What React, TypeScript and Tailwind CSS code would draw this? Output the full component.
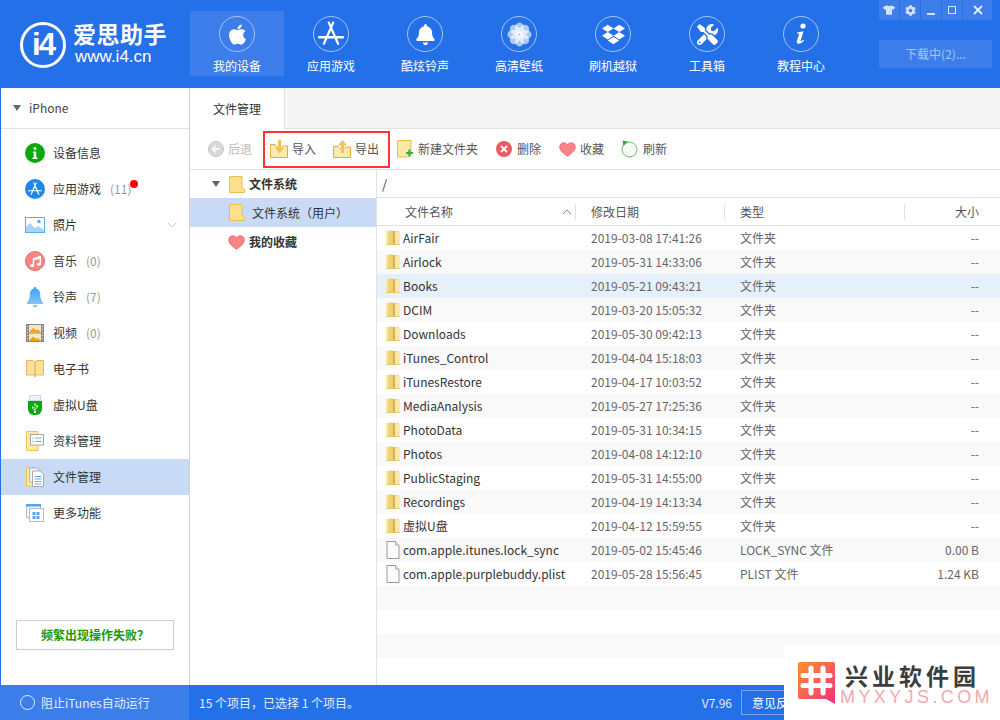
import type { ReactNode } from "react";
import { FaApple, FaBell, FaCog, FaDropbox, FaMusic, FaTools, FaTshirt, FaUsb } from "react-icons/fa";

const font = "font-['Noto_Sans_CJK_SC','Noto_Sans',sans-serif]";

const files = [
  ["AirFair", "2019-03-08 17:41:26", "文件夹", "--", "d"],
  ["Airlock", "2019-05-31 14:33:06", "文件夹", "--", "d"],
  ["Books", "2019-05-21 09:43:21", "文件夹", "--", "d"],
  ["DCIM", "2019-03-20 15:05:32", "文件夹", "--", "d"],
  ["Downloads", "2019-05-30 09:42:13", "文件夹", "--", "d"],
  ["iTunes_Control", "2019-04-04 15:18:03", "文件夹", "--", "d"],
  ["iTunesRestore", "2019-04-17 10:03:52", "文件夹", "--", "d"],
  ["MediaAnalysis", "2019-05-27 17:25:36", "文件夹", "--", "d"],
  ["PhotoData", "2019-05-31 10:34:15", "文件夹", "--", "d"],
  ["Photos", "2019-04-08 14:12:10", "文件夹", "--", "d"],
  ["PublicStaging", "2019-05-31 14:55:00", "文件夹", "--", "d"],
  ["Recordings", "2019-04-19 14:13:34", "文件夹", "--", "d"],
  ["虚拟U盘", "2019-04-12 15:59:55", "文件夹", "--", "d"],
  ["com.apple.itunes.lock_sync", "2019-05-02 15:45:46", "LOCK_SYNC 文件", "0.00 B", "f"],
  ["com.apple.purplebuddy.plist", "2019-05-28 15:56:45", "PLIST 文件", "1.24 KB", "f"],
  ["", "", "", "", ""],
  ["", "", "", "", ""],
  ["", "", "", "", ""],
  ["", "", "", "", ""],
  ["", "", "", "", ""],
];

/* ── Small drawings ───────────────────────────────────────────── */
function Flower() {
  return (
    <svg viewBox="0 0 24 24" className="h-[25px] w-[25px]">
      {[0, 45, 90, 135, 180, 225, 270, 315].map((a) => (
        <ellipse key={a} cx="12" cy="6" rx="4.4" ry="5.6" fill="#fff" fillOpacity="0.62" transform={`rotate(${a} 12 12)`} />
      ))}
      <circle cx="12" cy="12" r="2.6" fill="#fff" />
      <circle cx="12" cy="12" r="1" fill="#8fb6f2" />
    </svg>
  );
}

function AppStoreGlyph({ size = 24 }: { size?: number }) {
  return (
    <svg viewBox="0 0 24 24" width={size} height={size} fill="none" stroke="#fff" strokeWidth="2.1" strokeLinecap="round">
      <path d="M14 1.500 5.500 21M10 1.500 18.500 21M1 15h22" />
    </svg>
  );
}

function InfoGlyph() {
  return (
    <svg viewBox="0 0 12 22" className="h-[22px] w-3" fill="#fff">
      <circle cx="8" cy="3" r="2.600" />
      <path d="M2 9.500 8.500 8.200 5.700 17.500c-.2.800.5 1 1.100.5l1.700-1.500.6.7c-1.500 2-3.400 3.500-5.400 3.500-1.700 0-2.200-1.100-1.800-2.700L4 11.500c.2-.9-.4-1-1.900-.8z" />
    </svg>
  );
}

function NoteFolder({ className = "" }: { className?: string }) {
  return (
    <svg viewBox="0 0 16 17" className={className}>
      <path d="M.5.500h12.500v11.500l2.500 1.500v3H.5z" fill="#fde08f" stroke="#e9bf4f" />
    </svg>
  );
}

function Heart({ className = "" }: { className?: string }) {
  return (
    <svg viewBox="0 0 18 16" className={className}>
      <path d="M9 15.200C3.500 11.400.7 8.600.7 5.200.7 2.700 2.600.8 5 .8c1.700 0 3.100.8 4 2.200C9.900 1.600 11.300.8 13 .8c2.400 0 4.300 1.900 4.300 4.400 0 3.400-2.800 6.200-8.300 10z" fill="#fb8287" stroke="#e8646b" strokeWidth="0.8" />
    </svg>
  );
}

function YellowFolder() {
  return (
    <svg viewBox="0 0 14 18" className="h-[18px] w-[14px] shrink-0">
      <path d="M.5 2h13v14H.5z" fill="#f6e08f" />
      <path d="M6.500 2h2.500v14H6.500z" fill="#d9b24f" />
      <path d="M.5 2.500 6.500 1v15H.5z" fill="#f0d276" />
      <path d="M.5 2.500H2V16H.5z" fill="#fbeab0" />
      <path d="M9 3h4.500v13H9z" fill="#f8e8a6" />
      <path d="M.5 15h13v1H.5z" fill="#e6c768" />
    </svg>
  );
}

function FileIcon() {
  return (
    <svg viewBox="0 0 14 18" className="h-[18px] w-[14px] shrink-0">
      <path d="M1 .5h8.500L13 4v13.500H1z" fill="#fbfbfb" stroke="#9a9a9a" />
      <path d="M9.500.5V4H13" fill="#eee" stroke="#aaa" />
    </svg>
  );
}

function ImportIcon() {
  return (
    <svg viewBox="0 0 18 18" className="h-[18px] w-[18px]">
      <path d="M.5 4.500H5L7.500 8h3L13 6h4.500v11.500H.5z" fill="#fdeaaf" stroke="#e2ab3c" />
      <path d="M8 0h3v8h3l-4.500 5.500L5 8h3z" fill="#f3c05a" />
    </svg>
  );
}

function ExportIcon() {
  return (
    <svg viewBox="0 0 18 18" className="h-[18px] w-[18px]">
      <path d="M.5 6.500H5L7.500 9h3L13 7h4.500v10.500H.5z" fill="#fdeaaf" stroke="#e2ab3c" />
      <path d="M8 13V5.500H5L9.500 0 14 5.500h-3V13z" fill="#f3c05a" />
    </svg>
  );
}

function sideIcon(name: string): ReactNode {
  switch (name) {
    case "info":
      return (
        <svg viewBox="0 0 20 20" className="h-5 w-5">
          <circle cx="10" cy="10" r="10" fill="#0aa80a" />
          <circle cx="10" cy="5.500" r="1.500" fill="#fff" />
          <path d="M8 8.500h3.200v6H12.500V16h-5v-1.500h1.200V10H8z" fill="#fff" />
        </svg>
      );
    case "app":
      return (
        <span className="flex h-5 w-5 items-center justify-center rounded-full bg-[#1f86ea]">
          <AppStoreGlyph size={14} />
        </span>
      );
    case "photo":
      return (
        <svg viewBox="0 0 20 16" className="h-4 w-5">
          <rect x="0.500" y="0.500" width="19" height="15" fill="#fff" stroke="#58acf2" />
          <path d="M1 15V10l4-4 5 5 3-2 6 4v2z" fill="#a5d5fb" />
          <circle cx="14" cy="4.500" r="1.700" fill="#58acf2" />
        </svg>
      );
    case "music":
      return (
        <span className="flex h-5 w-5 items-center justify-center rounded-full border border-[#e86a6a] bg-[#f88585]">
          <FaMusic className="h-[11px] w-[11px] text-white" />
        </span>
      );
    case "bell":
      return (
        <svg viewBox="0 0 20 20" className="h-5 w-5">
          <defs>
            <linearGradient id="bellFill" x1="0" y1="0" x2="0" y2="1">
              <stop offset="0" stopColor="#3ea4f5" />
              <stop offset="1" stopColor="#8ccbfb" />
            </linearGradient>
          </defs>
          <path d="M10 0c.8 0 1.300.6 1.300 1.500 3 .8 3.900 3.300 3.900 6.200 0 3.800 1 6 3 8.300v1H1.800v-1c2-2.300 3-4.500 3-8.300 0-2.900.9-5.400 3.900-6.200C8.700.6 9.200 0 10 0zM8 18h4a2 2 0 0 1-4 1.500z" fill="url(#bellFill)" />
        </svg>
      );
    case "video":
      return (
        <svg viewBox="0 0 18 18" className="h-[18px] w-[18px]">
          <rect width="18" height="18" fill="#8a8a8a" />
          <rect x="3" y="1" width="12" height="7.500" fill="#f6e7c6" />
          <rect x="3" y="9.500" width="12" height="7.500" fill="#f6e7c6" />
          <path d="M3 8.500 7 4l3 2.500 2-1 3 3zM3 17l4-4.500 3 2.500 2-1 3 3z" fill="#f2a20c" />
          <path d="M1 2h1v1H1zM1 5h1v1H1zM1 8h1v1H1zM1 11h1v1H1zM1 14h1v1H1zM16 2h1v1h-1zM16 5h1v1h-1zM16 8h1v1h-1zM16 11h1v1h-1zM16 14h1v1h-1z" fill="#e8e8e8" />
        </svg>
      );
    case "book":
      return (
        <svg viewBox="0 0 18 18" className="h-[18px] w-[18px]">
          <path d="M.5.500H7l2 1.500 2-1.500h6.500v14.500H.5z" fill="#fee391" stroke="#eeb06e" />
          <path d="M8 2h2v14.500l-1 1-1-1z" fill="#f3bd82" />
        </svg>
      );
    case "usb":
      return (
        <span className="relative flex h-5 w-[14px] flex-col items-center">
          <span className="h-[6px] w-[12px] border border-[#ccd6e4] bg-[#eef2f8]" />
          <span className="flex h-[14px] w-[14px] items-center justify-center rounded-b-[6px] bg-[#0aa80a]">
            <FaUsb className="h-[10px] w-[10px] rotate-[-90deg] text-white" />
          </span>
        </span>
      );
    case "data":
      return (
        <svg viewBox="0 0 18 20" className="h-5 w-[18px]">
          <path d="M.5.500H12V19.500H.5z" fill="#fde9ac" stroke="#f0c64a" />
          <rect x="4.500" y="3.500" width="13" height="10.500" fill="#fff" stroke="#a8a8a8" />
          <path d="M6.500 7h1.500M9.500 7h6M6.500 10.500h1.500M9.500 10.500h6" stroke="#6aa9ee" />
        </svg>
      );
    case "files":
      return (
        <svg viewBox="0 0 18 20" className="h-5 w-[18px]">
          <path d="M.5.500H9v18.500H.5z" fill="#fde9ac" stroke="#f0c64a" />
          <path d="M3.500 1h9v14h-9z" fill="#f4f4f4" stroke="#b5b5b5" />
          <path d="M6.500 4H14l3.500 3v12.500h-11z" fill="#fff" stroke="#a8a8a8" />
          <path d="M8.500 9.500h7M8.500 12h7M8.500 14.500h7M8.500 17h7" stroke="#6aa9ee" />
        </svg>
      );
    default:
      return (
        <svg viewBox="0 0 18 18" className="h-[18px] w-[18px]">
          <rect x="0.500" y="0.500" width="14" height="13" fill="#f4f4f4" stroke="#bbb" />
          <rect x="0" y="0" width="15" height="2.500" fill="#54a6f0" />
          <rect x="3.500" y="4.500" width="14" height="13" fill="#fff" stroke="#bbb" />
          <path d="M6.500 8h3v3h-3zM10.500 8h3v3h-3zM6.500 12h3v3h-3zM10.500 12h3v3h-3z" fill="#54a6f0" />
        </svg>
      );
  }
}

/* ── Header ───────────────────────────────────────────────────── */
const navItems: { label: string; icon: ReactNode; active?: boolean }[] = [
  { label: "我的设备", icon: <FaApple className="h-[23px] w-[23px] text-white" />, active: true },
  { label: "应用游戏", icon: <AppStoreGlyph size={26} /> },
  { label: "酷炫铃声", icon: <FaBell className="h-[21px] w-[21px] text-white" /> },
  { label: "高清壁纸", icon: <Flower /> },
  { label: "刷机越狱", icon: <FaDropbox className="h-[23px] w-[23px] text-white" /> },
  { label: "工具箱", icon: <FaTools className="h-[21px] w-[21px] text-white" /> },
  { label: "教程中心", icon: <InfoGlyph /> },
];

function Header() {
  return (
    <div className="flex h-[88px] shrink-0 bg-[#2470e8] text-white">
      <div className="flex w-[190px] shrink-0 items-center pl-5 pt-[1px]">
        <div className="flex h-[46px] w-[46px] items-center justify-center rounded-full border-[3px] border-white font-['Liberation_Sans',sans-serif] text-[31px] font-bold leading-none tracking-[-2px]">
          i4
        </div>
        <div className="mb-[5px] ml-[7px] flex flex-col">
          <span className="text-[23px] font-bold leading-[29px] tracking-[0.5px]">爱思助手</span>
          <span className="pl-[2px] font-['Liberation_Sans',sans-serif] text-[17px] leading-[18px]">www.i4.cn</span>
        </div>
      </div>
      <div className="flex pt-[11px]">
        {navItems.map((n) => (
          <div key={n.label} className={`flex h-[65px] w-[94px] flex-col items-center pt-[5px] ${n.active ? "bg-[#3d7dea]" : ""}`}>
            <span className="flex h-9 w-9 items-center justify-center rounded-full border border-[#a4c3f4]">{n.icon}</span>
            <span className="mt-[5px] text-[12px] leading-[18px]">{n.label}</span>
          </div>
        ))}
      </div>
      <div className="ml-[31px] flex w-[113px] flex-col">
        <div className="flex h-5 gap-[1px] text-[#d5e3fa]">
          <span className="flex w-5 items-center justify-center bg-[#3d7dea]"><FaTshirt className="h-3 w-3" /></span>
          <span className="flex w-5 items-center justify-center bg-[#3d7dea]"><FaCog className="h-[11px] w-[11px]" /></span>
          <span className="flex w-5 items-center justify-center bg-[#3d7dea]"><span className="mt-[7px] h-[2px] w-2 bg-[#d5e3fa]" /></span>
          <span className="flex w-5 items-center justify-center bg-[#3d7dea]"><span className="h-2 w-2 border border-[#d5e3fa]" /></span>
          <span className="flex flex-1 items-center justify-center bg-[#3d7dea]">
            <svg viewBox="0 0 10 10" className="h-[10px] w-[10px]" stroke="#e5eefc" strokeWidth="1.800"><path d="M1 1l8 8M9 1l-8 8" /></svg>
          </span>
        </div>
        <div className="mt-5 flex h-[28px] items-center justify-center bg-[#3d7dea] text-[12px] text-[#a9c6f3]">下载中(2)...</div>
      </div>
    </div>
  );
}

/* ── Sidebar ──────────────────────────────────────────────────── */
const sideItems = [
  { label: "设备信息", icon: "info" },
  { label: "应用游戏", icon: "app", count: "(11)", dot: true },
  { label: "照片", icon: "photo", chevron: true },
  { label: "音乐", icon: "music", count: "(0)" },
  { label: "铃声", icon: "bell", count: "(7)" },
  { label: "视频", icon: "video", count: "(0)" },
  { label: "电子书", icon: "book" },
  { label: "虚拟U盘", icon: "usb" },
  { label: "资料管理", icon: "data" },
  { label: "文件管理", icon: "files", active: true },
  { label: "更多功能", icon: "more" },
];

function Sidebar() {
  return (
    <div className="flex w-[190px] shrink-0 flex-col border-l border-r border-l-[#2470e8] border-r-[#cfcfcf] bg-white">
      <div className="flex h-[41px] shrink-0 items-center border-b border-[#e2e2e2] pl-3 text-[12px] text-[#444]">
        <span className="h-0 w-0 border-x-4 border-t-[6px] border-x-transparent border-t-[#666]" />
        <span className="ml-2">iPhone</span>
      </div>
      <div className="mt-[6px] flex flex-col">
        {sideItems.map((s) => (
          <div key={s.label} className={`relative flex h-9 items-center text-[12px] text-[#333] ${s.active ? "bg-[#c9daf7]" : ""}`}>
            <span className="flex w-[52px] shrink-0 justify-center pl-[16px]">{sideIcon(s.icon)}</span>
            <span>{s.label}</span>
            {s.count && <span className="ml-[9px] text-[#9a9a9a]">{s.count}</span>}
            {s.dot && <span className="absolute left-[129px] top-[9px] h-2 w-2 rounded-full bg-[#f00]" />}
            {s.chevron && (
              <svg viewBox="0 0 10 6" className="ml-auto mr-[12px] h-[6px] w-[10px]" fill="none" stroke="#ccc">
                <path d="M1 1l4 4 4-4" />
              </svg>
            )}
          </div>
        ))}
      </div>
      <div className="mx-[15px] mb-[35px] mt-auto flex h-[30px] items-center justify-center border border-[#ccc] text-[12px] font-bold text-[#1a9a00]">
        频繁出现操作失败？
      </div>
    </div>
  );
}

/* ── Toolbar ──────────────────────────────────────────────────── */
function ToolBtn({ icon, label, className = "" }: { icon: ReactNode; label: string; className?: string }) {
  return (
    <div className={`flex items-center gap-1 text-[12px] text-[#555] ${className}`}>
      {icon}
      <span>{label}</span>
    </div>
  );
}

function Toolbar() {
  return (
    <div className="flex h-[41px] shrink-0 items-center border-b border-[#e2e2e2] pl-[18px]">
      <div className="flex items-center gap-1 text-[12px] text-[#bbb]">
        <span className="flex h-4 w-4 items-center justify-center rounded-full border border-[#c8c8c8] bg-[#d8d8d8]">
          <svg viewBox="0 0 10 10" className="h-[10px] w-[10px]" fill="none" stroke="#fff" strokeWidth="1.500"><path d="M5 1.500 1.500 5 5 8.500M1.500 5H9" /></svg>
        </span>
        <span>后退</span>
      </div>
      <div className="ml-[11px] flex h-[37px] w-[127px] items-center border-2 border-[#f33] pl-[5px]">
        <ToolBtn icon={<ImportIcon />} label="导入" />
        <ToolBtn icon={<ExportIcon />} label="导出" className="ml-[17px]" />
      </div>
      <ToolBtn
        className="ml-[7px] gap-[5px]"
        label="新建文件夹"
        icon={
          <svg viewBox="0 0 16 18" className="h-[18px] w-4">
            <path d="M.5.500H14v12l-2 4.500H.5z" fill="#fde9a6" stroke="#e9bf4f" />
            <path d="M9 13h7M12.500 9.500v7" stroke="#36ad46" strokeWidth="2.200" />
          </svg>
        }
      />
      <ToolBtn
        className="ml-[18px] gap-[5px]"
        label="删除"
        icon={
          <span className="flex h-4 w-4 items-center justify-center rounded-full bg-[#ee5a60]">
            <svg viewBox="0 0 8 8" className="h-2 w-2" stroke="#fff" strokeWidth="1.800"><path d="M1 1l6 6M7 1 1 7" /></svg>
          </span>
        }
      />
      <ToolBtn className="ml-[18px]" label="收藏" icon={<Heart className="h-[15px] w-[17px]" />} />
      <ToolBtn
        className="ml-[17px] gap-[5px]"
        label="刷新"
        icon={
          <svg viewBox="0 0 17 18" className="h-[18px] w-[17px]" fill="none">
            <circle cx="8.500" cy="9.500" r="7.500" fill="#f4fbf2" stroke="#6bbf62" />
            <path d="M1.500 .5 7 1.500 2.500 6z" fill="#36a846" />
          </svg>
        }
      />
    </div>
  );
}

/* ── Tree and table ───────────────────────────────────────────── */
function Tree() {
  return (
    <div className="flex w-[187px] shrink-0 flex-col border-r border-[#e2e2e2] text-[12px] text-[#333]">
      <div className="flex h-[28px] shrink-0 items-center pl-[22px] font-bold">
        <span className="h-0 w-0 border-x-4 border-t-[6px] border-x-transparent border-t-[#666]" />
        <NoteFolder className="ml-[9px] h-[17px] w-4" />
        <span className="ml-[4px]">文件系统</span>
      </div>
      <div className="flex h-[29px] shrink-0 items-center bg-[#c9daf7] pl-[39px]">
        <NoteFolder className="h-[17px] w-4" />
        <span className="ml-[7px]">文件系统（用户）</span>
      </div>
      <div className="flex h-[30px] shrink-0 items-center pl-[38px] font-bold">
        <Heart className="h-[15px] w-[17px]" />
        <span className="ml-[4px]">我的收藏</span>
      </div>
    </div>
  );
}

const rowGrid = "grid grid-cols-[199px_149px_180px_1fr]";

function FileTable() {
  return (
    <div className="flex min-w-0 flex-1 flex-col text-[12px]">
      <div className="flex h-[28px] shrink-0 items-center border-b border-[#e2e2e2] pl-[5px] text-[13px] text-[#444]">/</div>
      <div className={`${rowGrid} h-[28px] shrink-0 items-center border-b border-[#e2e2e2] text-[#555]`}>
        <div className="flex h-[16px] items-center border-r border-[#e2e2e2] pl-7">
          <span>文件名称</span>
          <svg viewBox="0 0 10 6" className="ml-auto mr-[3px] h-[6px] w-[10px]" fill="none" stroke="#888"><path d="M1 5l4-4 4 4" /></svg>
        </div>
        <div className="flex h-[16px] items-center border-r border-[#e2e2e2] pl-[15px]">修改日期</div>
        <div className="flex h-[16px] items-center border-r border-[#e2e2e2] pl-[15px]">类型</div>
        <div className="pr-[21px] text-right">大小</div>
      </div>
      <div className="min-h-0 flex-1 overflow-hidden">
        {files.map(([name, date, type, size, kind], i) => (
          <div
            key={i}
            className={`${rowGrid} h-6 items-center ${i === 2 ? "bg-[#e5f0fb]" : i % 2 ? "bg-[#f9f9f9]" : "bg-white"}`}
          >
            <div className="flex items-center gap-[3px] pl-[9px] text-[#333]">
              {kind === "d" && <YellowFolder />}
              {kind === "f" && <FileIcon />}
              <span className="whitespace-nowrap">{name}</span>
            </div>
            <div className="pl-[15px] text-[#666]">{date}</div>
            <div className="pl-[15px] text-[#666]">{type}</div>
            <div className="pr-[21px] text-right text-[#666]">{size}</div>
          </div>
        ))}
      </div>
    </div>
  );
}

/* ── Status bar and watermark ─────────────────────────────────── */
function StatusBar() {
  return (
    <div className="flex h-[35px] shrink-0 items-center bg-[#2470e8] text-[12px] text-[#e3edfc]">
      <div className="flex h-full w-[189px] shrink-0 items-center bg-[#3b7de9] pl-5">
        <span className="h-[15px] w-[15px] rounded-full border border-[#e3edfc]" />
        <span className="ml-[6px]">阻止iTunes自动运行</span>
      </div>
      <span className="ml-[10px]">15 个项目，已选择 1 个项目。</span>
      <span className="ml-auto">V7.96</span>
      <span className="ml-[9px] mr-[189px] flex h-[25px] w-[70px] items-center justify-center border border-[#7aa5ee] text-white">意见反馈</span>
    </div>
  );
}

function Watermark() {
  return (
    <div className="absolute bottom-0 right-0 flex h-[75px] w-[216px] bg-white pl-[14px] pt-[17px]">
      <svg viewBox="0 0 37 44" className="h-[44px] w-[37px] shrink-0">
        <defs>
          <linearGradient id="wmFill" x1="0" y1="0" x2="1" y2="1">
            <stop offset="0" stopColor="#fb8f2e" />
            <stop offset="1" stopColor="#f5307f" />
          </linearGradient>
        </defs>
        <path d="M2 0h33a2 2 0 0 1 2 2v40l-9-5H2a2 2 0 0 1-2-2V2a2 2 0 0 1 2-2z" fill="url(#wmFill)" />
        <path d="M13 6v25M25 6v25M5 13.500h27M5 23.500h27" stroke="#fff" strokeWidth="5" strokeLinecap="round" />
      </svg>
      <div className="ml-[5px] flex flex-col">
        <span className="whitespace-nowrap pl-[5px] text-[23px] font-bold leading-[26px] tracking-[4px] text-[#3c3c3c]">兴业软件园</span>
        <span className="mt-[1px] whitespace-nowrap font-['Liberation_Sans',sans-serif] text-[18px] leading-[17px] tracking-[3.4px] text-[#f5a8ae]">MYXYJS.COM</span>
      </div>
    </div>
  );
}

export default function App() {
  return (
    <div className={`relative flex h-[720px] w-[1000px] flex-col overflow-hidden bg-white ${font}`}>
      <Header />
      <div className="flex min-h-0 flex-1">
        <Sidebar />
        <div className="flex min-w-0 flex-1 flex-col">
          <div className="flex h-[41px] shrink-0 border-b border-[#e2e2e2] bg-[#f5f5f5]">
            <div className="flex h-[41px] w-[95px] items-center justify-center border-r border-[#e2e2e2] bg-white text-[12px] text-[#333]">文件管理</div>
          </div>
          <Toolbar />
          <div className="flex min-h-0 flex-1">
            <Tree />
            <FileTable />
          </div>
        </div>
      </div>
      <StatusBar />
      <Watermark />
    </div>
  );
}
